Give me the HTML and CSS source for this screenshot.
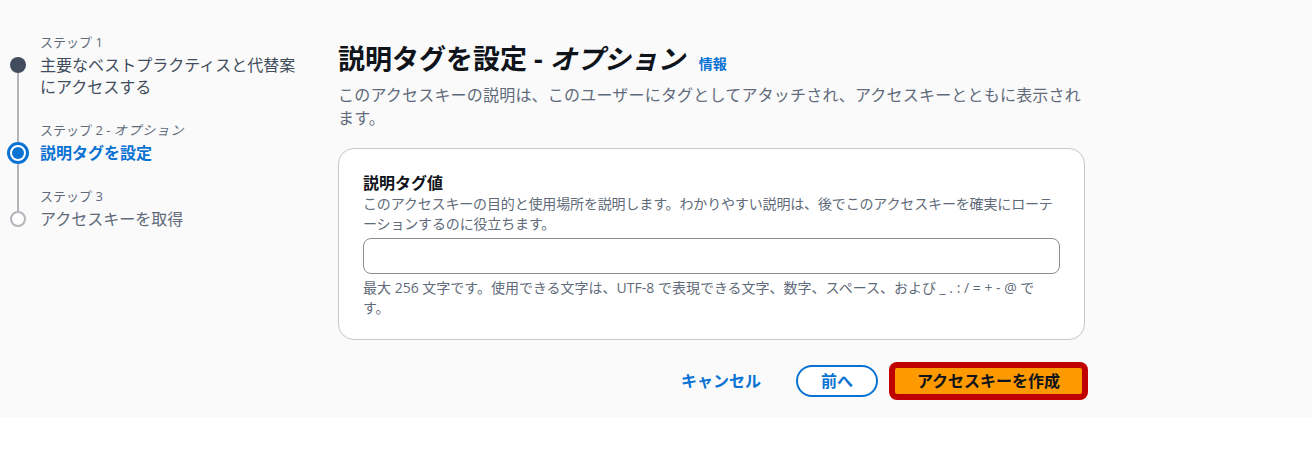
FILE: index.html
```html
<!DOCTYPE html>
<html lang="ja">
<head>
<meta charset="utf-8">
<title>説明タグを設定</title>
<link rel="stylesheet" href="styles.css">
</head>
<body>
<div class="page">
  <nav class="wizard-nav">
    <ol class="steps">
      <li class="step">
        <div class="rail"><span class="rail-top rail-top-small"></span><span class="dot dot-done"></span><span class="rail-line"></span></div>
        <div class="step-text step-text-gap">
          <div class="step-label">ステップ 1</div>
          <div class="step-title step-title-done">主要なベストプラクティスと代替案にアクセスする</div>
        </div>
      </li>
      <li class="step">
        <div class="rail"><span class="rail-top rail-top-line"></span><span class="dot dot-active"></span><span class="rail-line"></span></div>
        <div class="step-text step-text-gap">
          <div class="step-label">ステップ 2 - <i>オプション</i></div>
          <div class="step-title step-title-active">説明タグを設定</div>
        </div>
      </li>
      <li class="step">
        <div class="rail"><span class="rail-top rail-top-small rail-top-line"></span><span class="dot dot-next"></span></div>
        <div class="step-text">
          <div class="step-label">ステップ 3</div>
          <div class="step-title step-title-next">アクセスキーを取得</div>
        </div>
      </li>
    </ol>
  </nav>

  <main class="content">
    <h1 class="page-title">説明タグを設定 - <i>オプション</i><a class="info-link" href="#">情報</a></h1>
    <p class="page-desc">このアクセスキーの説明は、このユーザーにタグとしてアタッチされ、アクセスキーとともに表示されます。</p>

    <section class="card">
      <label class="field-label" for="tag">説明タグ値</label>
      <div class="field-desc">このアクセスキーの目的と使用場所を説明します。わかりやすい説明は、後でこのアクセスキーを確実にローテーションするのに役立ちます。</div>
      <input class="field-input" id="tag" type="text">
      <div class="field-constraint">最大 256 文字です。使用できる文字は、UTF-8 で表現できる文字、数字、スペース、および _ . : / = + - @ です。</div>
    </section>

    <div class="actions">
      <button class="btn-link" type="button">キャンセル</button>
      <button class="btn-normal" type="button">前へ</button>
      <button class="btn-primary" type="button">アクセスキーを作成</button>
    </div>
  </main>
</div>
</body>
</html>
```

FILE: styles.css
```css
* { box-sizing: border-box; }

body {
  margin: 0;
  background: #ffffff;
  font-family: "Open Sans", "Noto Sans CJK JP", sans-serif;
  color: #0f141a;
}

.page {
  display: flex;
  background: #fafafa;
  padding-bottom: 20px;
}

/* ---------- wizard navigation ---------- */
.wizard-nav {
  width: 300px;
  flex: none;
  padding-top: 32px;
}

.steps {
  list-style: none;
  margin: 0;
  padding: 0;
}

.step {
  display: grid;
  grid-template-columns: 36px 1fr;
  column-gap: 4px;
}

.rail {
  display: flex;
  flex-direction: column;
  align-items: center;
}

.rail-top {
  width: 2px;
  height: 22px;
  flex: none;
}
.rail-top-small { height: 25px; }
.rail-top-line { background: #b4b4bb; }

.rail-line {
  width: 2px;
  flex: 1;
  background: #b4b4bb;
}

.dot {
  flex: none;
  border-radius: 50%;
}
.dot-done {
  width: 16px;
  height: 16px;
  background: #414d5c;
}
.dot-active {
  width: 22px;
  height: 22px;
  border: 3px solid #0972d3;
  background: #ffffff;
  display: grid;
  place-items: center;
}
.dot-active::after {
  content: "";
  width: 12px;
  height: 12px;
  border-radius: 50%;
  background: #0972d3;
}
.dot-next {
  width: 16px;
  height: 16px;
  border: 2px solid #b4b4bb;
  background: #ffffff;
}

.step-text-gap { padding-bottom: 22px; }

.step-label {
  font-size: 13px;
  line-height: 20px;
  color: #5f6b7a;
  margin-bottom: 2px;
}
.step-label i { letter-spacing: 1.2px; }

.step-title {
  font-size: 16px;
  line-height: 22px;
}
.step-title-done { color: #414d5c; }
.step-title-active { color: #0972d3; font-weight: 700; }
.step-title-next { color: #5f6b7a; }

/* ---------- main content ---------- */
.content {
  width: 747px;
  flex: none;
  margin-left: 38px;
  padding-top: 42px;
}

.page-title {
  margin: 0;
  font-size: 27px;
  line-height: 34px;
  font-weight: 700;
  color: #0f141a;
}

.info-link {
  margin-left: 14px;
  font-size: 14px;
  line-height: 1;
  font-weight: 700;
  font-style: normal;
  color: #0972d3;
  text-decoration: none;
}

.page-desc {
  margin: 8px 0 0;
  font-size: 16px;
  letter-spacing: 0.2px;
  line-height: 23px;
  color: #5f6b7a;
}

.card {
  margin-top: 18px;
  background: #ffffff;
  border: 1px solid #c6c6cd;
  border-radius: 16px;
  padding: 23px 24px 21px;
}

.field-label {
  display: block;
  font-size: 16px;
  line-height: 22px;
  font-weight: 700;
  color: #0f141a;
}

.field-desc,
.field-constraint {
  font-size: 14px;
  line-height: 20px;
  color: #5f6b7a;
}

.field-desc {
  letter-spacing: -0.15px;
  line-break: loose;
}

.field-input {
  display: block;
  width: 100%;
  height: 36px;
  margin-top: 4px;
  border: 1px solid #8c8c94;
  border-radius: 8px;
  background: #ffffff;
  font: inherit;
}

.field-constraint { margin-top: 4px; }

.actions {
  margin-top: 25px;
  display: flex;
  justify-content: flex-end;
  align-items: center;
  gap: 14px;
}

.actions button {
  font-family: inherit;
  font-size: 16px;
  font-weight: 700;
  line-height: 22px;
  height: 32px;
  cursor: pointer;
}

.btn-link {
  border: none;
  background: none;
  color: #0972d3;
  padding: 0 21px;
}

.btn-normal {
  border: 2px solid #0972d3;
  border-radius: 20px;
  background: #ffffff;
  color: #0972d3;
  padding: 0 23px;
}

.btn-primary {
  width: 193px;
  border: 3px solid #c00000;
  border-radius: 5px;
  box-shadow: 0 0 0 3px #c00000;
  background: #ff9900;
  color: #0f141a;
  padding: 0;
}
```
